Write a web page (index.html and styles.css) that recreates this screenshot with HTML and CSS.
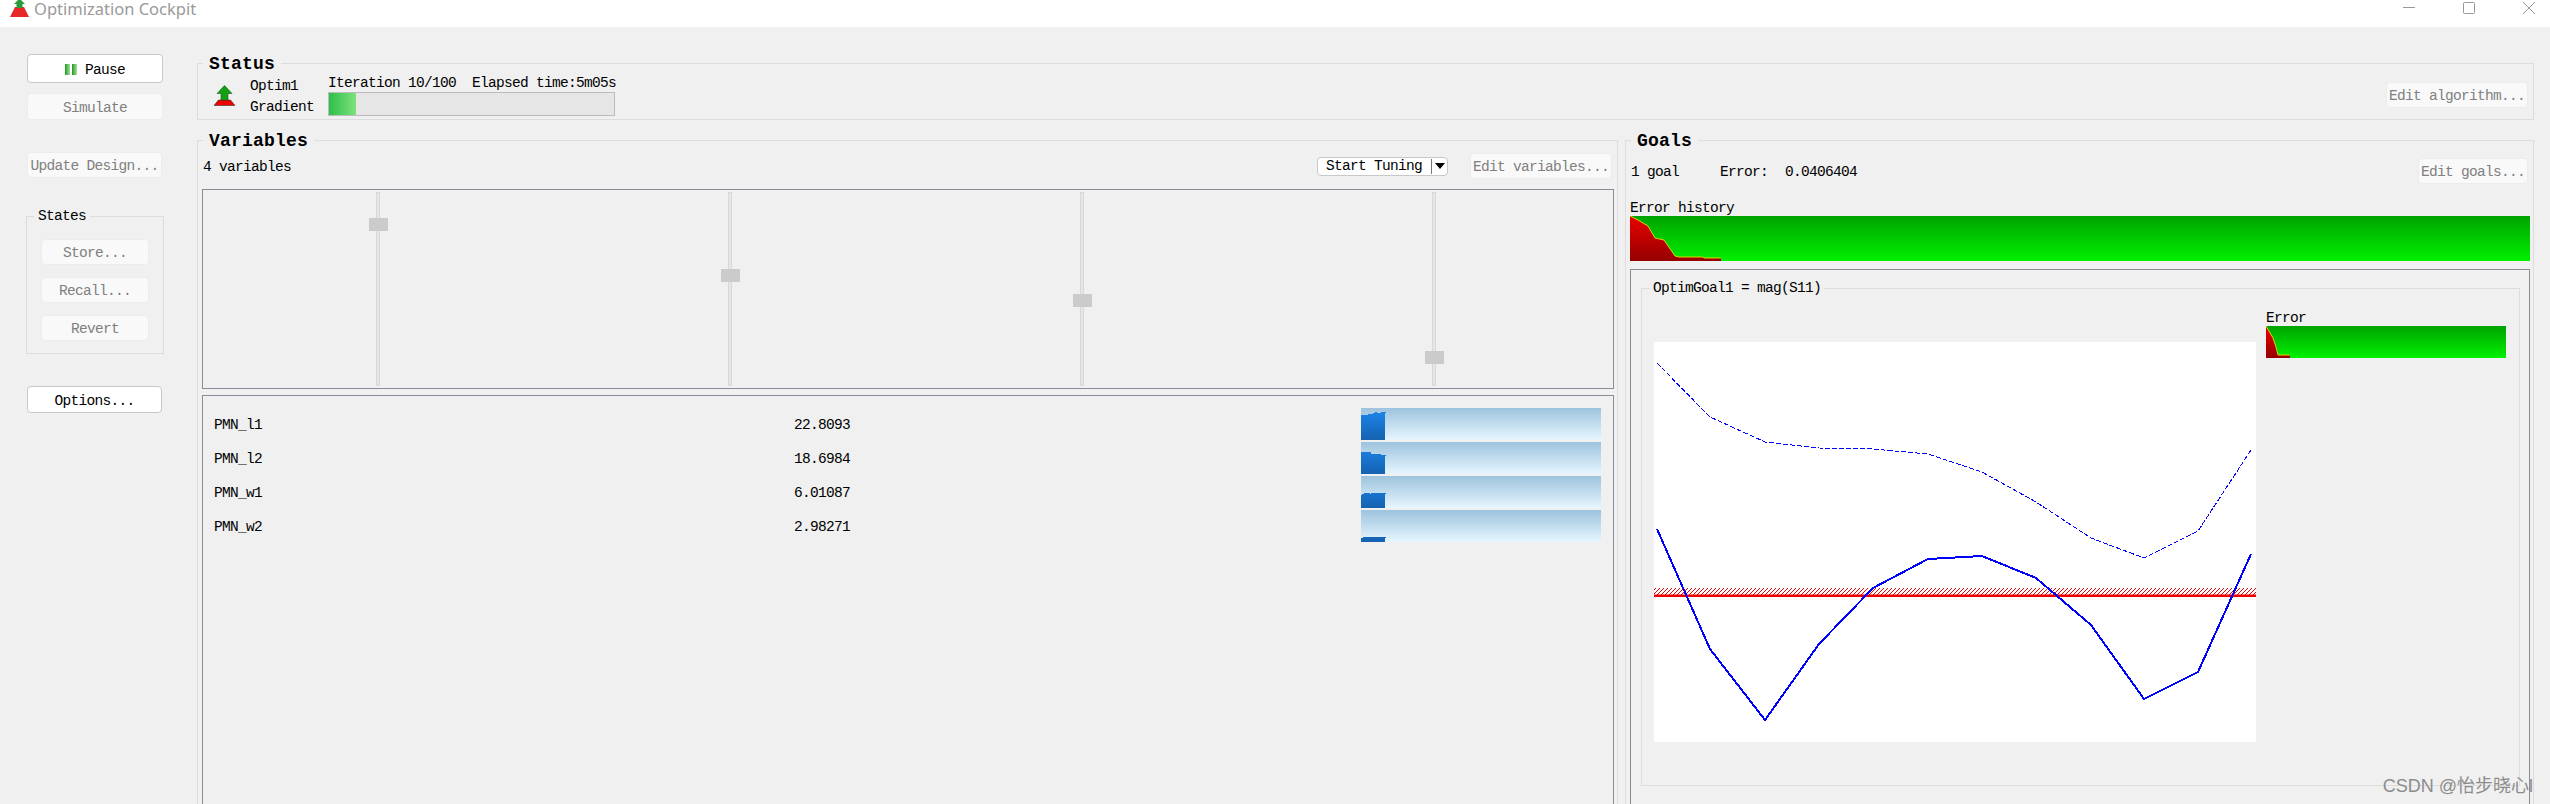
FILE: index.html
```html
<!DOCTYPE html>
<html lang="en">
<head>
    <meta charset="UTF-8">
    <title>Optimization Cockpit</title>
    <link rel="stylesheet" href="styles.css">
</head>
<body>
    <svg class="defs" width="0" height="0">
        <defs>
            <symbol id="optim-icon" viewBox="0 0 21 21">
                <polygon points="4.5,15 16.5,15 21,20.5 0,20.5" fill="#f00000" stroke="#303030" stroke-width="0.6"/>
                <polygon points="10.5,0.5 18,8.5 14,8.5 14,15 7,15 7,8.5 3,8.5" fill="#12a012" stroke="#1a5a1a" stroke-width="0.6"/>
            </symbol>
            <linearGradient id="red-45" gradientUnits="userSpaceOnUse" x1="0" y1="0" x2="0" y2="45">
                <stop offset="0" stop-color="#ea0000"/>
                <stop offset="1" stop-color="#950000"/>
            </linearGradient>
            <linearGradient id="red-32" gradientUnits="userSpaceOnUse" x1="0" y1="0" x2="0" y2="32">
                <stop offset="0" stop-color="#ea0000"/>
                <stop offset="1" stop-color="#950000"/>
            </linearGradient>
            <linearGradient id="blue-32" gradientUnits="userSpaceOnUse" x1="0" y1="0" x2="0" y2="32">
                <stop offset="0" stop-color="#1c88f0"/>
                <stop offset="1" stop-color="#1562b0"/>
            </linearGradient>
            <pattern id="hatch" width="4" height="4" patternUnits="userSpaceOnUse">
                <path d="M0 4L4 0" stroke="#f00000" stroke-width="1"/>
            </pattern>
        </defs>
    </svg>

    <div class="titlebar">
        <svg class="title-icon" width="19" height="17">
            <polygon points="5,7 14,7 19,17 0,17" fill="#e82828"/>
            <polygon points="8,0 11,0 15,4 12.5,4 12.5,8 6.5,8 6.5,4 4,4" fill="#2a9a3a"/>
        </svg>
        <span class="title-text">Optimization Cockpit</span>
        <div class="window-buttons">
            <svg width="12" height="12"><path d="M0 5.5H12" stroke="#999"/></svg>
            <svg width="12" height="12"><rect x="0.5" y="0.5" width="11" height="11" rx="1" fill="none" stroke="#999"/></svg>
            <svg width="12" height="12"><path d="M0 0L12 12M12 0L0 12" stroke="#999"/></svg>
        </div>
    </div>

    <div class="main">
        <div class="sidebar">
            <button class="button pause-button"><span class="pause-icon"></span>Pause</button>
            <button class="button off simulate-button">Simulate</button>
            <button class="button off update-button">Update Design...</button>
            <fieldset class="states">
                <legend>States</legend>
                <button class="button off">Store...</button>
                <button class="button off">Recall...</button>
                <button class="button off">Revert</button>
            </fieldset>
            <button class="button options-button">Options...</button>
        </div>

        <div class="content">
            <fieldset class="group status">
                <legend>Status</legend>
                <div class="status-row">
                    <svg class="status-icon"><use href="#optim-icon"/></svg>
                    <div class="status-names">
                        <div>Optim1</div>
                        <div>Gradient</div>
                    </div>
                    <div class="status-progress">
                        <div class="progress-text">Iteration 10/100&nbsp;&nbsp;Elapsed time:5m05s</div>
                        <div class="progress-bar"><div class="progress-fill" style="width: 9.5%"></div></div>
                    </div>
                    <button class="button off algorithm-button">Edit algorithm...</button>
                </div>
            </fieldset>

            <div class="lower">
                <fieldset class="group variables">
                    <legend>Variables</legend>
                    <div class="toolbar">
                        <span class="var-count">4 variables</span>
                        <div class="tuning-button">
                            <span class="tuning-label">Start Tuning</span>
                            <span class="tuning-arrow"></span>
                        </div>
                        <button class="button off edit-vars">Edit variables...</button>
                    </div>

                    <div class="panel sliders">
                        <div class="slider"><div class="track"><div class="handle" style="top: 25px"></div></div></div>
                        <div class="slider"><div class="track"><div class="handle" style="top: 76px"></div></div></div>
                        <div class="slider"><div class="track"><div class="handle" style="top: 101px"></div></div></div>
                        <div class="slider"><div class="track"><div class="handle" style="top: 158px"></div></div></div>
                    </div>

                    <div class="panel var-list">
                        <div class="var-row">
                            <span>PMN_l1</span><span>22.8093</span>
                            <svg class="spark" width="240" height="32"><polygon points="0,7 7,7 7,6 12,6 12,5 14,5 14,4 16,4 16,5 20,5 20,4 25,4 25,5 24,5 24,32 0,32" fill="url(#blue-32)"/></svg>
                        </div>
                        <div class="var-row">
                            <span>PMN_l2</span><span>18.6984</span>
                            <svg class="spark" width="240" height="32"><polygon points="0,10 10,10 10,12 20,12 20,13 25,13 25,14 24,14 24,32 0,32" fill="url(#blue-32)"/></svg>
                        </div>
                        <div class="var-row">
                            <span>PMN_w1</span><span>6.01087</span>
                            <svg class="spark" width="240" height="32"><polygon points="0,19 1,19 1,18 3,18 3,17 9,17 9,18 10,18 10,17 25,17 25,18 24,18 24,32 0,32" fill="url(#blue-32)"/></svg>
                        </div>
                        <div class="var-row">
                            <span>PMN_w2</span><span>2.98271</span>
                            <svg class="spark" width="240" height="32"><polygon points="0,28 2,28 2,27 25,27 25,28 24,28 24,32 0,32" fill="url(#blue-32)"/></svg>
                        </div>
                    </div>
                </fieldset>

                <fieldset class="group goals">
                    <legend>Goals</legend>
                    <div class="goals-toolbar">
                        <span class="goal-count">1 goal</span>
                        <span class="goal-error">Error:</span>
                        <span>0.0406404</span>
                        <button class="button off edit-goals">Edit goals...</button>
                    </div>

                    <div class="bar-label">Error history</div>
                    <svg class="error-bar history-bar" width="900" height="45">
                        <polygon points="0,0 8,4 18,10 25,22 34,24 45,40 49,41 73,41 74,42 91,42 91,45 0,45" fill="url(#red-45)"/>
                        <polyline points="0,0 8,4 18,10 25,22 34,24 45,40 49,41 73,41 74,42 91,42" fill="none" stroke="#d8d800"/>
                    </svg>

                    <div class="panel goal-panel">
                        <fieldset class="goal-box">
                            <legend>OptimGoal1 = mag(S11)</legend>
                            <div class="goal-row">
                                <svg class="plot" width="602" height="400">
                                    <rect y="246" width="602" height="7" fill="url(#hatch)"/>
                                    <rect y="252.5" width="602" height="2.5" fill="#f00000"/>
                                    <polyline class="trace-start" points="3,21 56,75 111,100 165,106 219,107 274,112 328,130 382,160 437,196 490,216 544,189 597,108"/>
                                    <polyline class="trace" points="3,187 56,307 111,378 165,302 219,246 274,217 328,214 382,236 437,283 490,357 544,330 597,212"/>
                                </svg>
                                <div class="goal-side">
                                    <div class="side-label">Error</div>
                                    <svg class="error-bar" width="240" height="32">
                                        <polygon points="0,0 3,5 7,12 10,21 12,29 24,29 24,32 0,32" fill="url(#red-32)"/>
                                        <polyline points="0,0 3,5 7,12 10,21 12,29 24,29" fill="none" stroke="#d8d800"/>
                                    </svg>
                                </div>
                            </div>
                        </fieldset>
                    </div>
                </fieldset>
            </div>
        </div>
    </div>

    <div class="watermark">CSDN @怡步晓心l</div>
</body>
</html>
```

FILE: styles.css
```css
html, body {
    height: 804px;
    overflow: hidden;
}

body {
    margin: 0;
    position: relative;
    background-color: #f0f0f0;
    color: #000;
    font-family: "Liberation Mono", "DejaVu Sans Mono", monospace;
    font-size: 14.5px;
    letter-spacing: -0.7px;
}

.defs {
    position: absolute;
}

/* window title */
.titlebar {
    display: flex;
    height: 27px;
    background-color: #fff;
    overflow: hidden;
}

.title-icon {
    flex: none;
    margin-left: 10px;
}

.title-text {
    margin-left: 5px;
    color: #9a9a9a;
    font-family: "Noto Sans", sans-serif;
    font-size: 16.5px;
    line-height: 17px;
    letter-spacing: 0;
}

.window-buttons {
    display: flex;
    gap: 48px;
    margin: 2px 15px 0 auto;
}

.main {
    display: flex;
    padding: 25px 16px 0 27px;
}

/* shared controls */
.button {
    display: block;
    width: 135px;
    height: 27px;
    padding: 2px 0 0;
    background-color: #fff;
    border: 1px solid #c8c8c8;
    border-radius: 4px;
    color: #000;
    font: inherit;
    letter-spacing: inherit;
    white-space: nowrap;
}

.button.off {
    background-color: #f9f9f9;
    border-color: #ececec;
    color: #808080;
}

fieldset {
    min-width: 0;
    margin: 0;
    padding: 0;
    box-sizing: border-box;
    border: 1px solid #dcdcdc;
}

.panel {
    box-sizing: border-box;
    border: 1px solid #8a8a96;
}

/* left column */
.sidebar {
    flex: none;
    width: 170px;
    padding-top: 2px;
}

.pause-button {
    display: flex;
    align-items: center;
    justify-content: center;
    gap: 8px;
    width: 136px;
    height: 29px;
}

.pause-icon {
    width: 12px;
    height: 11px;
    background:
        linear-gradient(90deg, #1c9c1c, #a8e0a0) left / 5px 100% no-repeat,
        linear-gradient(90deg, #1c9c1c, #a8e0a0) right / 5px 100% no-repeat;
}

.simulate-button {
    width: 136px;
    margin-top: 10px;
}

.update-button {
    height: 26px;
    margin-top: 32px;
}

.states {
    width: 138px;
    height: 146px;
    margin: 30px 0 0 -1px;
}

.states legend {
    margin-left: 7px;
    padding: 0 4px;
    line-height: 16px;
}

.states .button {
    width: 108px;
    height: 26px;
    margin: 0 0 12px 14px;
}

.states .button:first-of-type {
    margin-top: 15px;
}

.options-button {
    margin-top: 32px;
}

/* right side */
.content {
    flex: 1;
    min-width: 0;
}

.group legend {
    margin-left: 5px;
    padding: 2px 6px 0;
    font-size: 18px;
    font-weight: bold;
    line-height: 20px;
    letter-spacing: 0.2px;
}

.status {
    height: 68px;
}

.status-row {
    display: flex;
    align-items: flex-start;
    padding: 0 5px 0 16px;
}

.status-icon {
    flex: none;
    width: 21px;
    height: 21px;
    margin: 11px 15px 0 0;
}

.status-names {
    flex: none;
    width: 78px;
    margin-top: 2px;
    line-height: 21px;
}

.status-progress {
    width: 287px;
    white-space: nowrap;
}

.progress-text {
    padding-top: 1px;
    line-height: 17px;
}

.progress-bar {
    box-sizing: border-box;
    height: 24px;
    background-color: #e6e6e6;
    border: 1px solid #bcbcbc;
}

.progress-fill {
    height: 100%;
    background: linear-gradient(90deg, #2dbf47, #7ce27e);
}

.algorithm-button {
    width: 142px;
    height: 26px;
    margin: 8px 0 0 auto;
}

.lower {
    display: flex;
    gap: 7px;
    margin-top: 9px;
}

.variables {
    flex: none;
    width: 1421px;
    height: 700px;
    padding: 0 3px 0 4px;
}

.variables legend {
    margin-left: 1px;
}

.toolbar {
    display: flex;
    align-items: center;
    height: 30px;
    margin-bottom: 8px;
}

.var-count {
    margin-right: auto;
    padding: 2px 0 0 1px;
}

.tuning-button {
    display: flex;
    align-items: center;
    box-sizing: border-box;
    width: 131px;
    height: 19px;
    background-color: #fff;
    border: 1px solid #c8c8c8;
    border-radius: 4px;
}

.tuning-label {
    width: 105px;
    padding-left: 8px;
    border-right: 1px solid #777;
    line-height: 15px;
    white-space: nowrap;
}

.tuning-arrow {
    width: 0;
    height: 0;
    margin-left: 3px;
    border-top: 6px solid #000;
    border-left: 5px solid transparent;
    border-right: 5px solid transparent;
}

.edit-vars {
    width: 142px;
    height: 26px;
    margin: 0 2px 0 22px;
}

.sliders {
    display: grid;
    grid-template-columns: repeat(4, 1fr);
    height: 200px;
    padding-right: 2px;
}

.slider {
    display: flex;
    justify-content: center;
    padding: 2px 2px 0 0;
}

.track {
    position: relative;
    box-sizing: border-box;
    width: 4px;
    height: 194px;
    background-color: #e6e6e6;
    border: 1px solid #d8d8d8;
}

.handle {
    position: absolute;
    left: -8px;
    width: 19px;
    height: 13px;
    background-color: #cbcbcb;
}

.var-list {
    height: 460px;
    margin-top: 6px;
    padding: 12px 12px 0 11px;
}

.var-row {
    display: grid;
    grid-template-columns: 580px 567px 240px;
    align-items: center;
    height: 32px;
    margin-bottom: 2px;
    line-height: 20px;
}

.var-row span {
    padding-top: 2px;
}

.spark {
    display: block;
    background: linear-gradient(#9dc3dd, #e6f6ff);
}

.goals {
    flex: 1;
    min-width: 0;
    height: 700px;
    padding-left: 4px;
}

.goals legend {
    margin-left: 1px;
}

.goals-toolbar {
    display: flex;
    align-items: center;
    height: 26px;
    margin-top: 7px;
    padding: 0 5px 0 1px;
}

.goals-toolbar span {
    padding-top: 2px;
}

.goal-count {
    width: 89px;
}

.goal-error {
    width: 65px;
}

.edit-goals {
    width: 110px;
    height: 26px;
    margin-left: auto;
}

.bar-label {
    margin-top: 16px;
    padding-top: 1px;
    line-height: 15px;
}

.error-bar {
    display: block;
    background: linear-gradient(#00a300, #00f000);
}

.goal-panel {
    width: 900px;
    height: 560px;
    margin-top: 8px;
    padding: 10px 9px 0 10px;
}

.goal-box {
    height: 506px;
}

.goals .goal-box legend {
    margin-left: 8px;
    padding: 1px 3px 0;
    font-size: 14.5px;
    font-weight: normal;
    line-height: 15px;
    letter-spacing: -0.7px;
}

.goal-row {
    display: flex;
    gap: 10px;
    padding-left: 12px;
}

.plot {
    flex: none;
    margin-top: 46px;
    background-color: #fff;
}

.trace {
    fill: none;
    stroke: #0000ff;
    stroke-width: 2;
    shape-rendering: crispEdges;
}

.trace-start {
    fill: none;
    stroke: #0000ff;
    stroke-width: 1;
    stroke-dasharray: 5 2;
    shape-rendering: crispEdges;
}

.goal-side {
    margin-top: 14px;
}

.side-label {
    padding-top: 1px;
    line-height: 15px;
}

.watermark {
    position: absolute;
    right: 17px;
    bottom: 9px;
    color: #8c8c8c;
    font-family: "Liberation Sans", "Noto Sans CJK SC", sans-serif;
    font-size: 18px;
    line-height: 18px;
    letter-spacing: 0;
}
```
